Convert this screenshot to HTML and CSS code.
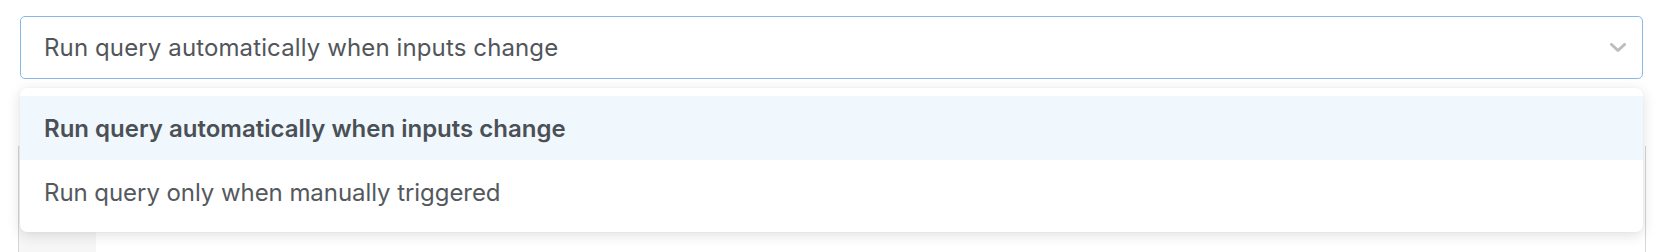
FILE: index.html
```html
<!DOCTYPE html>
<html>
<head>
<meta charset="utf-8">
<link rel="stylesheet" href="styles.css">
</head>
<body>
<div class="page">
  <div class="field">
    <div class="select">
      <span class="select-value">Run query automatically when inputs change</span>
      <svg class="chevron" width="16" height="10" viewBox="0 0 16 10"><polyline points="1.5,1.5 8,7.5 14.5,1.5" fill="none" stroke="#bdbdbd" stroke-width="3" stroke-linecap="round" stroke-linejoin="round"/></svg>
    </div>
    <div class="menu">
      <div class="option option-selected">Run query automatically when inputs change</div>
      <div class="option">Run query only when manually triggered</div>
    </div>
  </div>
  <div class="panel">
    <div class="panel-side"></div>
    <div class="panel-main"></div>
  </div>
</div>
</body>
</html>
```
FILE: styles.css
```css
html, body {
  margin: 0;
  padding: 0;
  background: #ffffff;
  font-family: Inter, "Noto Sans", sans-serif;
}
.page {
  padding: 16px 19px 0 20px;
  height: 236px;
  overflow: hidden;
}
.field {
  position: relative;
}
.select {
  box-sizing: border-box;
  height: 63px;
  border: 1.6px solid #86b8ec;
  border-radius: 5px;
  display: flex;
  align-items: center;
  justify-content: space-between;
  padding: 0 16px 0 23px;
  background: #ffffff;
}
.select-value {
  font-size: 24px;
  color: #52565b;
  letter-spacing: 0.12px;
}
.chevron {
  display: block;
}
.menu {
  position: absolute;
  left: 0;
  right: 0;
  top: 72px;
  background: #ffffff;
  border-radius: 7px;
  box-shadow: 0 3px 14px rgba(0, 0, 0, 0.13), 0 0 2px rgba(0, 0, 0, 0.05);
  padding: 8px 0;
  z-index: 2;
}
.option {
  height: 64px;
  display: flex;
  align-items: center;
  padding-left: 24px;
  font-size: 24px;
  color: #55595e;
  letter-spacing: -0.06px;
}
.option-selected {
  background: #f0f8fd;
  font-weight: 600;
  color: #4b5056;
  letter-spacing: 0;
}
.panel {
  margin: 67px -3px 0 -2px;
  height: 120px;
  border-left: 1.5px solid #d6d6d6;
  border-right: 1.5px solid #d6d6d6;
  display: flex;
}
.panel-side {
  width: 77px;
  background: #f6f6f6;
}
.panel-main {
  flex: 1;
  background: #ffffff;
}
```
